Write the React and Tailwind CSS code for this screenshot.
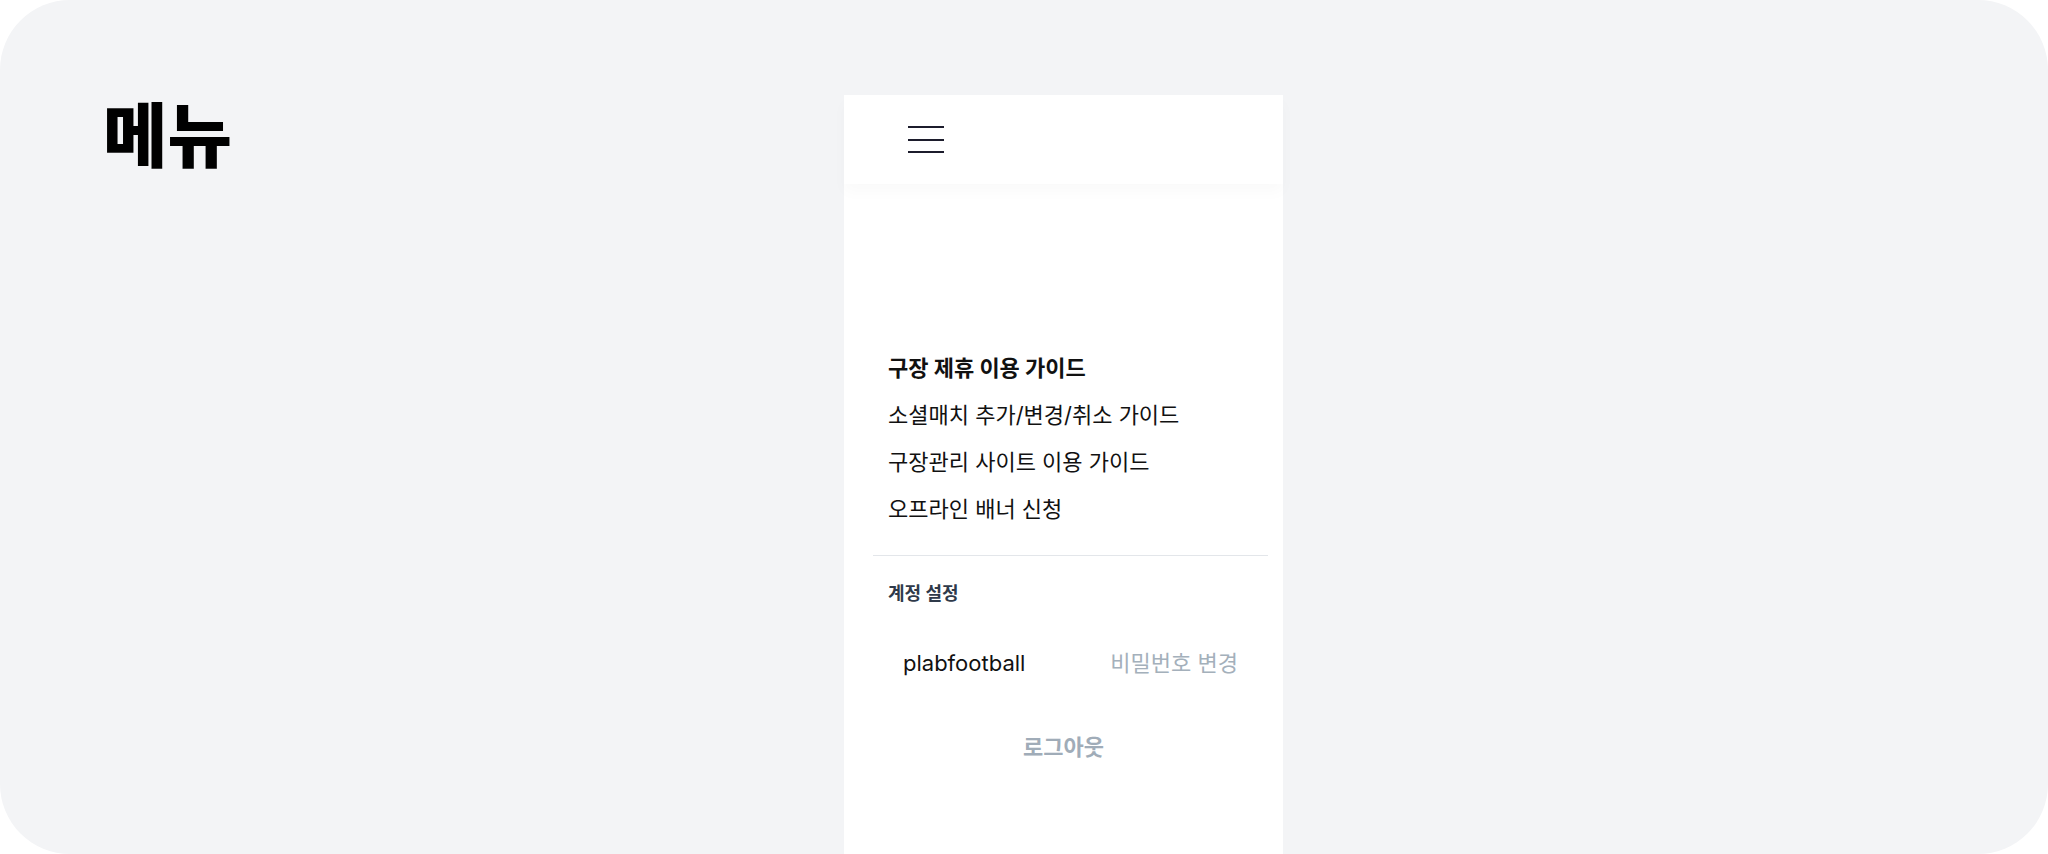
const menuItems = [
  { label: '구장 제휴 이용 가이드', bold: true },
  { label: '소셜매치 추가/변경/취소 가이드' },
  { label: '구장관리 사이트 이용 가이드' },
  { label: '오프라인 배너 신청' },
];

function Hamburger() {
  return (
    <button className="flex w-[36px] flex-col gap-[10.5px]">
      <span className="h-[2px] w-full bg-[#1c1c2c]" />
      <span className="h-[2px] w-full bg-[#1c1c2c]" />
      <span className="h-[2px] w-full bg-[#1c1c2c]" />
    </button>
  );
}

export default function App() {
  return (
    <div className="h-[854px] w-[2048px] bg-white font-['Inter','Noto_Sans_CJK_KR',sans-serif]">
      <div className="flex h-full items-start overflow-hidden rounded-[70px] bg-[#f3f4f6]">
        <div className="w-[844px] pl-[103px] pt-[97px]">
          <h1 className="font-['Noto_Sans_CJK_KR',sans-serif] text-[70px] font-black leading-none text-black">
            메뉴
          </h1>
        </div>

        <aside className="mt-[95px] flex h-[760px] w-[439px] flex-col bg-white">
          <header className="flex h-[89px] items-center pl-[64px] shadow-[0_8px_14px_rgba(0,0,0,0.025)]">
            <Hamburger />
          </header>

          <nav className="mt-[161px] pl-[44px]">
            <ul>
              {menuItems.map((m) => (
                <li
                  key={m.label}
                  className={`h-[47px] text-[22px] leading-[47px] text-[#111] ${m.bold ? 'font-bold' : 'font-normal'}`}
                >
                  {m.label}
                </li>
              ))}
            </ul>
          </nav>

          <div className="ml-[29px] mr-[15px] mt-[22px] border-t border-[#e3e6ea]" />

          <section className="pl-[44px] pt-[20px]">
            <h2 className="h-[36px] text-[18px] font-bold leading-[36px] text-[#2f3a4a]">계정 설정</h2>
          </section>

          <div className="mt-[29px] flex h-[44px] items-center justify-between pl-[59px] pr-[45px]">
            <span className="text-[22px] text-[#111]">plabfootball</span>
            <button className="text-[22px] text-[#a4b0bb]">비밀번호 변경</button>
          </div>

          <div className="mt-[48px] flex justify-center">
            <button className="text-[22px] font-bold leading-[28px] text-[#a0acb8]">로그아웃</button>
          </div>
        </aside>
      </div>
    </div>
  );
}
